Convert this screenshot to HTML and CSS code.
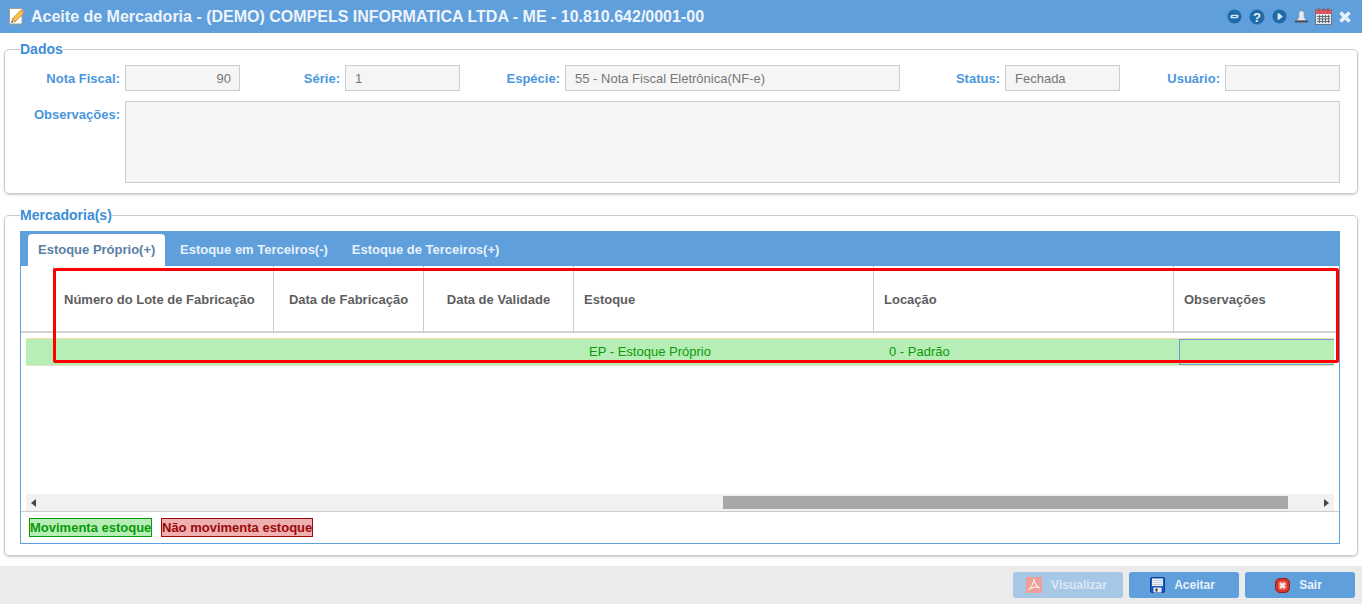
FILE: index.html
```html
<!DOCTYPE html>
<html lang="pt-BR">
<head>
<meta charset="utf-8">
<title>Aceite de Mercadoria</title>
<link rel="stylesheet" href="styles.css">
</head>
<body>
<div class="app">
  <header class="topbar">
    <svg class="title-icon" width="16" height="17" viewBox="0 0 16 17"><rect x=".5" y=".5" width="12.500" height="15.500" rx="1" fill="#fff" stroke="#a89f8c"/><path d="M3.500 10.500L11.500 2.500 14.500 5.500 6.500 13.500z" fill="#f4c24a" stroke="#b07a22" stroke-width=".6"/><path d="M11 3L12.300 1.700c.5-.4 1-.4 1.400 0l1 1c.4.400.4 1 0 1.400L14 5z" fill="#e8a05a"/><path d="M3.500 10.500L2.500 14.500l4-1z" fill="#f4dcae" stroke="#7a5a30" stroke-width=".5"/><path d="M2.500 14.500l.4-1.700 1.300 1.300z" fill="#5a3d20"/></svg>
    <h1 class="title">Aceite de Mercadoria - (DEMO) COMPELS INFORMATICA LTDA - ME - 10.810.642/0001-00</h1>
    <div class="top-icons">
      <svg width="15" height="15" viewBox="0 0 16 16"><circle cx="8" cy="8" r="7.500" fill="#1f6aa8"/><path d="M5.500 6.200h5.500c1 0 1.500.6 1.300 1.400-.2 1.200-1 2.200-2.300 2.200H5c-1 0-1.500-.6-1.300-1.400.2-1.200 .8-2.200 1.800-2.200z" fill="#d8e8f5"/><rect x="5.800" y="7.500" width="4.400" height="1" fill="#1f6aa8"/></svg>
      <svg width="16" height="16" viewBox="0 0 16 16"><circle cx="8" cy="8" r="7.500" fill="#1f6aa8" stroke="#3f8fc8" stroke-width=".6"/><text x="8" y="12.800" text-anchor="middle" class="q">?</text></svg>
      <svg width="15" height="15" viewBox="0 0 16 16"><circle cx="8" cy="8" r="7.500" fill="#1f6aa8"/><path d="M6 4.500h1.500L11.500 8l-4 3.500H6z" fill="#d8e8f5"/></svg>
      <svg width="15" height="15" viewBox="0 0 15 15"><circle cx="7.500" cy="1.300" r="1.100" fill="#8694a0"/><path d="M7.500 1.800C5.600 1.800 4.800 3.200 4.800 5v3.500L2.300 11.800h10.400L10.200 8.500V5c0-1.800-.8-3.200-2.700-3.200z" fill="#e6ecf1" stroke="#7f8c98" stroke-width=".7"/><rect x=".8" y="11.500" width="13.400" height="2" rx=".8" fill="#46525e"/><path d="M6 14.300h3" stroke="#8694a0"/></svg>
      <svg class="tight" width="17" height="17" viewBox="0 0 17 17"><rect x=".5" y="1.500" width="16" height="15" fill="#e4e7ea" stroke="#59636d" stroke-width=".8"/><rect x=".5" y="1.500" width="16" height="4.500" fill="#d8565e"/><path d="M4 0v3M8.500 0v3M13 0v3" stroke="#59636d"/><path d="M2 8.500h13M2 11h13M2 13.500h13M4.500 7v8M7.500 7v8M10.500 7v8M13.500 7v8" stroke="#59636d" stroke-width=".9"/></svg>
      <svg class="tight" width="14" height="14" viewBox="0 0 14 14"><path d="M2.500 2.500l9 9M11.500 2.500l-9 9" stroke="#e6f0fa" stroke-width="3.800"/></svg>
    </div>
  </header>

  <main class="content">
    <fieldset class="group group-data">
      <legend>Dados</legend>
      <div class="form-grid">
        <label>Nota Fiscal:</label><div class="field right">90</div>
        <label>Série:</label><div class="field">1</div>
        <label>Espécie:</label><div class="field">55 - Nota Fiscal Eletrônica(NF-e)</div>
        <label>Status:</label><div class="field">Fechada</div>
        <label>Usuário:</label><div class="field"></div>
        <label>Observações:</label><div class="field area"></div>
      </div>
    </fieldset>

    <fieldset class="group group-goods">
      <legend>Mercadoria(s)</legend>
      <section class="panel">
        <nav class="tabs">
          <span class="tab active">Estoque Próprio(+)</span>
          <span class="tab">Estoque em Terceiros(-)</span>
          <span class="tab">Estoque de Terceiros(+)</span>
        </nav>
        <div class="grid-wrap">
          <div class="grid-head">
            <div class="hcell blank"></div>
            <div class="hcell">Número do Lote de Fabricação</div>
            <div class="hcell center">Data de Fabricação</div>
            <div class="hcell center">Data de Validade</div>
            <div class="hcell">Estoque</div>
            <div class="hcell">Locação</div>
            <div class="hcell last">Observações</div>
          </div>
          <div class="grid-body">
            <div class="grid-row">
              <div class="rcell"></div>
              <div class="rcell">EP - Estoque Próprio</div>
              <div class="rcell">0 - Padrão</div>
              <div class="rcell selected"></div>
            </div>
          </div>
          <div class="scrollbar">
            <span class="arrow left"></span>
            <div class="track"><div class="thumb"></div></div>
            <span class="arrow right"></span>
          </div>
          <div class="highlight"></div>
        </div>
        <div class="legend-row">
          <span class="tag tag-green">Movimenta estoque</span>
          <span class="tag tag-red">Não movimenta estoque</span>
        </div>
      </section>
    </fieldset>
  </main>

  <footer class="actions">
    <button class="btn disabled"><svg width="16" height="16" viewBox="0 0 16 16"><rect width="16" height="16" fill="#ee9f98"/><path d="M8 2c-.3 3-2 7.500-5.500 11M8 2c-.3 3 2.500 7.500 6 9M3.500 12c3-2 6.500-2.200 10-1.300" stroke="#fbe6e3" stroke-width="1.200" fill="none"/></svg>Visualizar</button>
    <button class="btn"><svg width="15" height="16" viewBox="0 0 15 16"><rect x=".5" y=".5" width="14" height="15" rx="1.500" fill="#1857c4" stroke="#123e8c"/><rect x="2" y="1.500" width="11" height="7.500" fill="#f0f4fa"/><path d="M2.500 3.500h10M2.500 5.500h10M2.500 7.500h10" stroke="#b4c2d4" stroke-width=".8"/><rect x="3.500" y="10.500" width="8" height="5" fill="#e8eef6"/><rect x="5.500" y="11.500" width="2" height="3" fill="#333"/></svg>Aceitar</button>
    <button class="btn"><svg width="15" height="15" viewBox="0 0 16 16"><rect x=".5" y=".5" width="15" height="15" rx="5" fill="#d8322c" stroke="#8f1a16"/><rect x="3.500" y="3.500" width="9" height="9" rx="2" fill="#ee6a60"/><path d="M5.500 5.500l5 5M10.500 5.500l-5 5" stroke="#f8ece8" stroke-width="2.400"/></svg>Sair</button>
  </footer>
</div>
</body>
</html>
```
FILE: styles.css
```css
* { box-sizing: border-box; }
html, body { margin: 0; height: 100%; }
body { font-family: "Liberation Sans", Arial, sans-serif; font-size: 12px; color: #555; background: #fff; overflow: hidden; }
.app { width: 1362px; height: 604px; display: flex; flex-direction: column; }

.topbar { height: 33px; background: #5f9fdc; display: flex; align-items: center; padding: 0 10px 0 9px; flex: none; }
.title-icon { flex: none; margin-right: 6px; }
.title { margin: 0; flex: 1; font-size: 16px; font-weight: 700; color: #eef4fb; white-space: nowrap; }
.top-icons { display: flex; align-items: center; gap: 7px; }
.top-icons .tight { margin-left: -1px; }
.q { font: 700 13px "Liberation Sans", sans-serif; fill: #e8f2fb; }

.content { flex: 1; padding: 11px 4px 0 4px; display: flex; flex-direction: column; min-height: 0; }
.group { margin: 0; padding: 0; border: 1px solid #ccc; border-radius: 5px; box-shadow: 0 1px 2px #ccc; min-width: 0; }
.group legend { margin-left: 15px; padding: 0; font-size: 14px; font-weight: 700; color: #3c8dd8; line-height: 10px; height: 10px; }
.group-data { height: 150px; }
.group-goods { height: 346px; margin-top: 16px; }

.form-grid { display: grid; grid-template-columns: 115px 120px 100px 120px 100px 340px 100px 120px 100px 120px; grid-template-rows: 26px 82px; row-gap: 10px; padding-top: 11px; }
.form-grid label { font-size: 13px; font-weight: 700; color: #4a97dc; text-align: right; line-height: 27px; }
.field { margin-left: 5px; background: #f5f5f5; border: 1px solid #ccc; color: #777; font-size: 13px; line-height: 25px; padding: 0 9px; }
.field.right { text-align: right; padding-right: 8px; }
.field.area { grid-column: 2 / -1; }

.panel { margin: 11px 17px 0 15px; height: 313px; border: 1px solid #5f9fdc; border-top: 0; display: flex; flex-direction: column; }
.tabs { height: 35px; margin: 0 -1px; background: #5f9fdc; display: flex; align-items: flex-end; padding-left: 8px; gap: 1px; flex: none; }
.tab { height: 32px; padding: 0 9px 0 14px; font-size: 13px; font-weight: 700; color: #e8f1fa; line-height: 31px; white-space: nowrap; }
.tab.active { width: 137px; padding: 0 0 0 10px; background: #fff; color: #5b7fa5; border-radius: 4px 4px 0 0; }

.grid-wrap { position: relative; height: 246px; border-bottom: 1px solid #ccc; flex: none; display: flex; flex-direction: column; }
.grid-head { height: 67px; display: grid; grid-template-columns: 33px 220px 150px 150px 300px 300px 165px; border-bottom: 2px solid #d2d2d2; flex: none; }
.hcell { border-right: 1px solid #ccc; font-size: 13px; font-weight: 700; color: #5e5e5e; line-height: 67px; padding-left: 10px; white-space: nowrap; }
.hcell.blank { padding: 0; }
.hcell.center { text-align: center; padding: 0; }
.hcell.last { border-right: 0; }

.grid-body { height: 161px; padding: 5px 5px 0 5px; flex: none; }
.grid-row { height: 28px; display: grid; grid-template-columns: 553px 300px 300px 155px; background: #b6eeb6; border-top: 1px solid #f0dfae; border-bottom: 1px solid #e4e4c0; }
.rcell { padding-left: 10px; color: #0a9a0a; font-size: 13px; line-height: 26px; }
.rcell.selected { border: 1px solid #6d9bd6; border-right: 0; }

.scrollbar { height: 17px; margin: 0 5px; background: #f1f1f1; display: flex; align-items: center; flex: none; }
.track { flex: 1; height: 13px; }
.thumb { margin-left: 680px; width: 565px; height: 13px; background: #a8a8a8; }
.arrow { width: 15px; flex: none; display: flex; justify-content: center; }
.arrow.left { margin-right: 2px; }
.arrow.right { margin-left: 2px; }
.arrow::before { content: ""; border-top: 4px solid transparent; border-bottom: 4px solid transparent; }
.arrow.left::before { border-right: 5px solid #444; }
.arrow.right::before { border-left: 5px solid #444; }

.highlight { position: absolute; left: 32px; top: 2px; width: 1286px; height: 95px; border: 3px solid #f00; border-radius: 2px; pointer-events: none; }

.legend-row { display: flex; gap: 9px; padding: 6px 0 0 8px; }
.tag { height: 19px; padding: 0; font-size: 13px; font-weight: 700; line-height: 17px; border: 1px solid; white-space: nowrap; }
.tag-green { width: 123px; background: #b6eeb6; color: #0a9a0a; border-color: #0a9a0a; }
.tag-red { width: 152px; background: #eeb0b0; color: #9a0a0a; border-color: #9a0a0a; }

.actions { height: 38px; background: #ebebeb; display: flex; justify-content: flex-end; gap: 6px; padding: 6px 7px 0 0; flex: none; }
.btn { width: 110px; height: 26px; border: 0; border-radius: 3px; background: #5f9fdc; color: #e8f1fa; font: 700 12px "Liberation Sans", sans-serif; display: flex; align-items: center; justify-content: center; gap: 9px; padding: 0 3px 0 0; }
.btn.disabled { background: #a7c7e6; color: #dbe7f3; }
```
